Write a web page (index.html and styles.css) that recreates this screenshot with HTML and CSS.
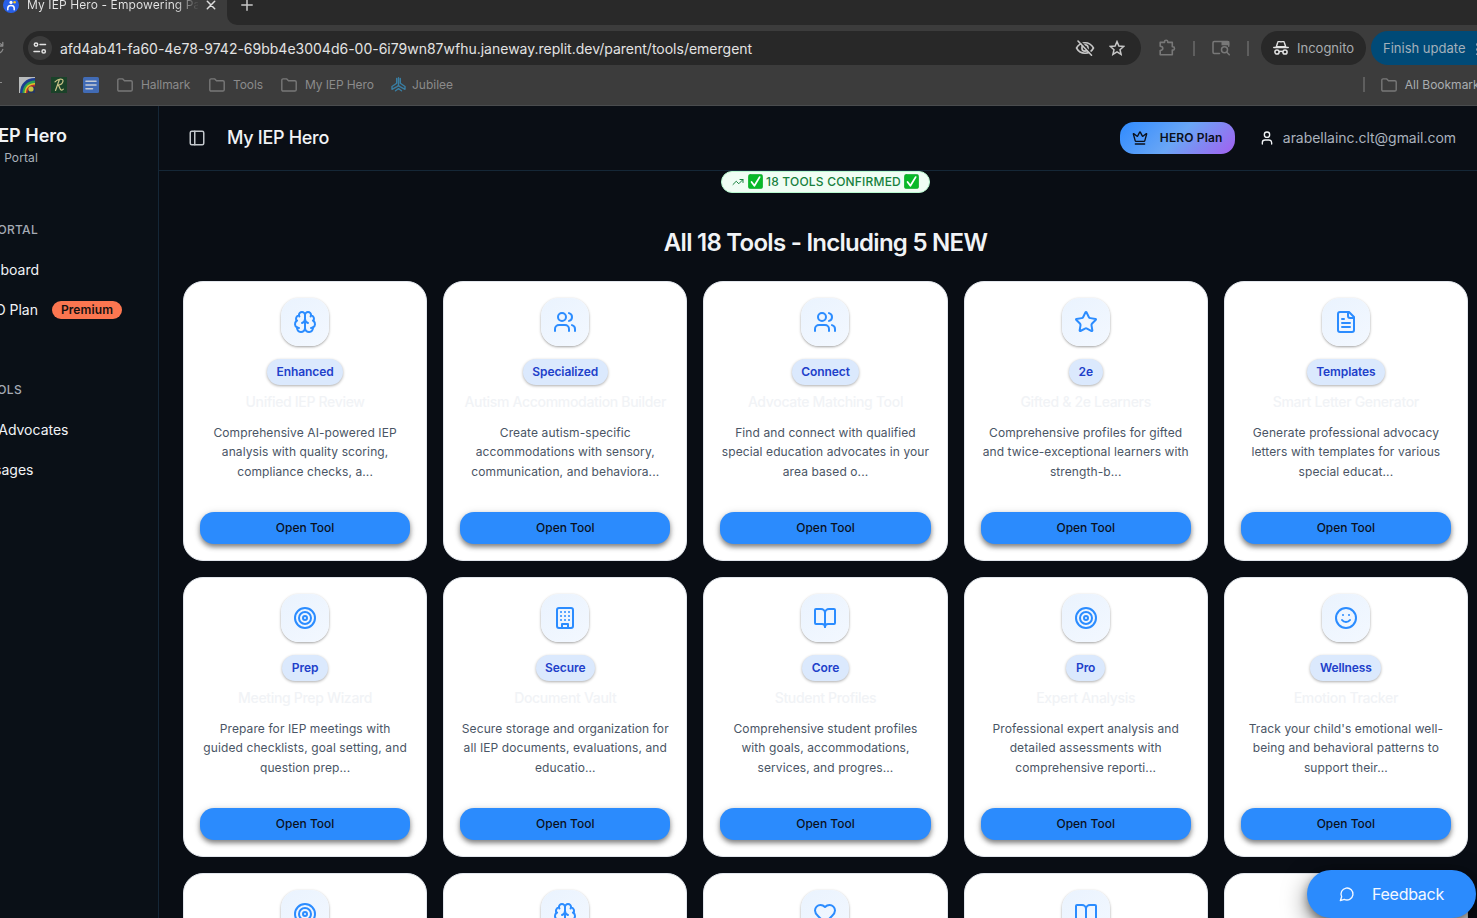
FILE: index.html
```html
<!DOCTYPE html>
<html lang="en">
<head>
<meta charset="utf-8">
<title>My IEP Hero - Empowering Parents</title>
<link rel="stylesheet" href="styles.css">
</head>
<body>
<svg class="sprite" aria-hidden="true">
  <symbol id="brain" viewBox="0 0 24 24"><path d="M12 5a3 3 0 1 0-5.997.125 4 4 0 0 0-2.526 5.77 4 4 0 0 0 .556 6.588A4 4 0 1 0 12 18Z"/><path d="M12 5a3 3 0 1 1 5.997.125 4 4 0 0 1 2.526 5.77 4 4 0 0 1-.556 6.588A4 4 0 1 1 12 18Z"/><path d="M15 13a4.5 4.5 0 0 1-3-4 4.5 4.5 0 0 1-3 4"/><path d="M17.599 6.5a3 3 0 0 0 .399-1.375M6.003 5.125A3 3 0 0 0 6.401 6.5M3.477 10.896a4 4 0 0 1 .585-.396M19.938 10.5a4 4 0 0 1 .585.396M6 18a4 4 0 0 1-1.967-.516M19.967 17.484A4 4 0 0 1 18 18"/></symbol>
  <symbol id="users" viewBox="0 0 24 24"><path d="M16 21v-2a4 4 0 0 0-4-4H6a4 4 0 0 0-4 4v2"/><circle cx="9" cy="7" r="4"/><path d="M22 21v-2a4 4 0 0 0-3-3.87M16 3.13a4 4 0 0 1 0 7.75"/></symbol>
  <symbol id="star" viewBox="0 0 24 24"><path d="M11.525 2.295a.53.53 0 0 1 .95 0l2.31 4.679a2.123 2.123 0 0 0 1.595 1.16l5.166.756a.53.53 0 0 1 .294.904l-3.736 3.638a2.123 2.123 0 0 0-.611 1.878l.882 5.14a.53.53 0 0 1-.771.56l-4.618-2.428a2.122 2.122 0 0 0-1.973 0L6.396 21.01a.53.53 0 0 1-.77-.56l.881-5.139a2.122 2.122 0 0 0-.611-1.879L2.16 9.795a.53.53 0 0 1 .294-.906l5.165-.755a2.122 2.122 0 0 0 1.597-1.16z"/></symbol>
  <symbol id="file" viewBox="0 0 24 24"><path d="M15 2H6a2 2 0 0 0-2 2v16a2 2 0 0 0 2 2h12a2 2 0 0 0 2-2V7Z"/><path d="M14 2v4a2 2 0 0 0 2 2h4M10 9H8M16 13H8M16 17H8"/></symbol>
  <symbol id="target" viewBox="0 0 24 24"><circle cx="12" cy="12" r="10"/><circle cx="12" cy="12" r="6"/><circle cx="12" cy="12" r="2"/></symbol>
  <symbol id="building" viewBox="0 0 24 24"><rect x="4" y="2" width="16" height="20" rx="2"/><path d="M9 22v-4h6v4M8 6h.01M16 6h.01M12 6h.01M12 10h.01M12 14h.01M16 10h.01M16 14h.01M8 10h.01M8 14h.01"/></symbol>
  <symbol id="book" viewBox="0 0 24 24"><path d="M12 7v14"/><path d="M3 18a1 1 0 0 1-1-1V4a1 1 0 0 1 1-1h5a4 4 0 0 1 4 4 4 4 0 0 1 4-4h5a1 1 0 0 1 1 1v13a1 1 0 0 1-1 1h-6a3 3 0 0 0-3 3 3 3 0 0 0-3-3z"/></symbol>
  <symbol id="smile" viewBox="0 0 24 24"><circle cx="12" cy="12" r="10"/><path d="M8 14s1.5 2 4 2 4-2 4-2M9 9h.01M15 9h.01"/></symbol>
  <symbol id="heart" viewBox="0 0 24 24"><path d="M19 14c1.49-1.46 3-3.21 3-5.5A5.5 5.5 0 0 0 16.5 3c-1.76 0-3 .5-4.5 2-1.5-1.5-2.74-2-4.5-2A5.5 5.5 0 0 0 2 8.500c0 2.300 1.500 4.050 3 5.500l7 7Z"/></symbol>
  <symbol id="folder" viewBox="0 0 16 14"><path d="M.8 11.7V2.2c0-.8.5-1.3 1.300-1.300h3.700l1.700 1.800h6.400c.8 0 1.300.5 1.300 1.300v7.700c0 .8-.5 1.300-1.300 1.300H2.100c-.8 0-1.300-.5-1.300-1.300z"/></symbol>
  <symbol id="check" viewBox="0 0 16 16"><rect x=".2" y=".2" width="15.6" height="15.6" rx="2.6" fill="#08b928" stroke="#08951f" stroke-width=".4"/><path d="M3.800 8.600l3 4 5.600-9.300" fill="none" stroke="#fff" stroke-width="1.9"/></symbol>
</svg>

<div class="browser">
  <div class="tabs">
    <div class="tab">
      <svg class="favicon" viewBox="0 0 16 16"><circle cx="8" cy="8" r="8" fill="#2860e8"/><circle cx="8" cy="5.4" r="1.6" fill="#fff"/><path d="M4.800 12.700V11q0-2.600 3.200-2.600t3.200 2.600v1.700" stroke="#fff" stroke-width="1.500" fill="none"/><circle cx="11.600" cy="5.300" r="1.300" fill="#f5c62c"/></svg>
      <span class="tab-title">My IEP Hero - Empowering Pa</span>
      <svg class="tab-close" viewBox="0 0 10 10"><path d="M1.3 1.3l7.400 7.400M8.700 1.300L1.300 8.700"/></svg>
    </div>
    <div class="strip"><svg class="plus" viewBox="0 0 12 12"><path d="M6 .8v10.400M.8 6h10.400"/></svg></div>
  </div>
  <div class="toolbar">
    <svg class="reload" viewBox="0 0 5 14"><path d="M-1 5h3.800V1.500M2.800 5Q1.500 2.800-1 2.300M-1 12q3-.7 3.800-3.600"/></svg>
    <div class="address">
      <span class="site"><svg viewBox="0 0 14 12"><circle cx="3" cy="2.600" r="1.700"/><path d="M7 2.600h5.500M1 9.400h5.500"/><circle cx="10.700" cy="9.400" r="1.700"/></svg></span>
      <span class="url">afd4ab41-fa60-4e78-9742-69bb4e3004d6-00-6i79wn87wfhu.janeway.replit.dev/parent/tools/emergent</span>
      <svg class="eye" viewBox="0 0 20 16"><path d="M1.500 8Q4.400 2.700 10 2.700T18.500 8Q15.600 13.300 10 13.300T1.500 8z"/><circle cx="10" cy="8" r="3.100"/><path class="cut" d="M4.200 0l13 14.500"/><path d="M3 1l13.500 14.200"/></svg>
      <svg class="fav" viewBox="0 0 16 16"><path d="M8 1.600l1.900 4.500 4.800.4-3.700 3.200 1.100 4.700L8 11.900l-4.100 2.500L5 9.700 1.300 6.500l4.800-.4z"/></svg>
    </div>
    <svg class="puzzle" viewBox="0 0 17 17"><path d="M1.200 3.400h4.300V2.700c0-2 3.300-2 3.300 0v.7h4.500v4.400h.6c2.100 0 2.100 3.300 0 3.300h-.6v4.700H1.200v-4.300c3.500-.4 3.500-4 0-4.300z"/></svg>
    <i class="rule"></i>
    <svg class="side-search" viewBox="0 0 18 16"><path d="M7.500 13.400H2.200c-.8 0-1.200-.5-1.200-1.200V2.800c0-.8.5-1.200 1.200-1.200h13.500c.7 0 1 .5 1 1.200v3.500"/><path class="solid" d="M9.500 1h7.700v4.300H9.500z"/><circle cx="12.500" cy="9.800" r="3"/><path d="M14.600 12l2.700 2.800"/></svg>
    <i class="rule"></i>
    <div class="incognito"><svg viewBox="0 0 16 14"><path class="hat" d="M3.300 5.800L4.800 1.200C5 .5 5.600.3 6.300.5L8 .9l1.700-.4c.7-.2 1.300 0 1.500.7l1.500 4.600z"/><path d="M.8 6.500h14.400M6.400 10.700q1.600-.9 3.200 0"/><circle cx="4" cy="11" r="2.100"/><circle cx="12" cy="11" r="2.100"/></svg><span>Incognito</span></div>
    <div class="update"><span>Finish update</span><i></i></div>
  </div>
  <div class="bookmarks">
    <i class="nub"></i>
    <svg class="bm-icon" viewBox="0 0 16 16"><path d="M0 0h16v16H0z" fill="#b9bcbc"/><path d="M1 16C1 7 7 1 16 1v15z" fill="#1d3c91"/><path d="M3.500 16C3.500 8.500 9 3.500 16 3.500V16z" fill="#2ba052"/><path d="M5.500 16C5.500 9.500 10 6 16 6v10z" fill="#e0c32c"/><path d="M7 16c0-5.500 4-8.500 9-8.500V16z" fill="#b62e2c"/><path d="M8.500 16c0-4 3-6.500 7.500-6.500V16z" fill="#26345f"/><circle cx="12" cy="12" r="2.600" fill="#c7c445"/></svg>
    <svg class="bm-icon" viewBox="0 0 16 16"><path d="M0 0h16v16H0z" fill="#1a4229"/><path d="M4 4.800C7 1.600 12.500 1 12 4.100 11.600 6.800 8.600 8 6.800 8.100c2 .2 1.500 4.700 3.600 5 .8.100 1.400-.5 1.900-1M8.200 3.300C6.800 6.500 6 10 4.500 13.500" fill="none" stroke="#c9c388" stroke-width="1.200"/></svg>
    <svg class="bm-icon" viewBox="0 0 16 16"><rect width="16" height="16" rx="1.500" fill="#416bb5"/><path d="M3 4.200h10M3 8h10M3 11.800h6.500" stroke="#c5cbd5" stroke-width="1.600"/></svg>
    <span class="bm w-hall"><svg class="folder"><use href="#folder"/></svg><span>Hallmark</span></span>
    <span class="bm w-tools"><svg class="folder"><use href="#folder"/></svg><span>Tools</span></span>
    <span class="bm w-hero"><svg class="folder"><use href="#folder"/></svg><span>My IEP Hero</span></span>
    <span class="bm"><svg class="jubilee" viewBox="0 0 15 15"><path d="M5.700 1.500v4.700L1 9.500v2.800l5-2.700 1.500-1M9.300 1.500v4.700L14 9.500v2.800L9 9.600l-1.500-1M7.500.700v7.900M4.500 13.800l3-2.200 3 2.200"/></svg><span>Jubilee</span></span>
    <span class="all"><i class="rule"></i><svg class="folder"><use href="#folder"/></svg><span>All Bookmarks</span></span>
  </div>
</div>

<div class="app">
  <aside class="sidebar">
    <div class="brand">EP Hero</div>
    <div class="sub">Portal</div>
    <div class="group g1">ORTAL</div>
    <div class="nav n1">board</div>
    <div class="nav plan"><span class="n2">O Plan</span><b class="premium">Premium</b></div>
    <div class="group g2">OLS</div>
    <div class="nav n3">Advocates</div>
    <div class="nav n4">sages</div>
  </aside>
  <main class="main">
    <header class="header">
      <svg class="panel" viewBox="0 0 24 24"><rect x="3" y="3" width="18" height="18" rx="2"/><path d="M9 3v18"/></svg>
      <span class="title">My IEP Hero</span>
      <div class="hero-plan"><svg viewBox="0 0 24 24"><path d="M11.562 3.266a.5.5 0 0 1 .876 0L15.390 8.870a1 1 0 0 0 1.516.294L21.183 5.500a.5.5 0 0 1 .798.519l-2.834 10.246a1 1 0 0 1-.956.734H5.810a1 1 0 0 1-.957-.734L2.020 6.020a.5.5 0 0 1 .798-.519l4.276 3.664a1 1 0 0 0 1.516-.294zM5 21h14"/></svg><span>HERO Plan</span></div>
      <div class="account"><svg viewBox="0 0 24 24"><path d="M19 21v-2a4 4 0 0 0-4-4H9a4 4 0 0 0-4 4v2"/><circle cx="12" cy="7" r="4"/></svg><span>arabellainc.clt@gmail.com</span></div>
    </header>
    <section class="content">
      <div class="confirmed"><svg class="trend" viewBox="0 0 24 24"><path d="M22 7l-8.500 8.500-5-5L2 17M16 7h6v6"/></svg><svg class="check"><use href="#check"/></svg><span>18 TOOLS CONFIRMED</span><svg class="check"><use href="#check"/></svg></div>
      <h1>All 18 Tools - Including 5 NEW</h1>
      <div class="grid">
        <article class="card"><div class="tile"><svg><use href="#brain"/></svg></div><div class="badge">Enhanced</div><h2>Unified IEP Review</h2><p>Comprehensive AI-powered IEP<br>analysis with quality scoring,<br>compliance checks, a...</p><button>Open Tool</button></article>
        <article class="card"><div class="tile"><svg><use href="#users"/></svg></div><div class="badge">Specialized</div><h2>Autism Accommodation Builder</h2><p>Create autism-specific<br>accommodations with sensory,<br>communication, and behaviora...</p><button>Open Tool</button></article>
        <article class="card"><div class="tile"><svg><use href="#users"/></svg></div><div class="badge">Connect</div><h2>Advocate Matching Tool</h2><p>Find and connect with qualified<br>special education advocates in your<br>area based o...</p><button>Open Tool</button></article>
        <article class="card"><div class="tile"><svg><use href="#star"/></svg></div><div class="badge">2e</div><h2>Gifted &amp; 2e Learners</h2><p>Comprehensive profiles for gifted<br>and twice-exceptional learners with<br>strength-b...</p><button>Open Tool</button></article>
        <article class="card"><div class="tile"><svg><use href="#file"/></svg></div><div class="badge">Templates</div><h2>Smart Letter Generator</h2><p>Generate professional advocacy<br>letters with templates for various<br>special educat...</p><button>Open Tool</button></article>
        <article class="card"><div class="tile"><svg><use href="#target"/></svg></div><div class="badge">Prep</div><h2>Meeting Prep Wizard</h2><p>Prepare for IEP meetings with<br>guided checklists, goal setting, and<br>question prep...</p><button>Open Tool</button></article>
        <article class="card"><div class="tile"><svg><use href="#building"/></svg></div><div class="badge">Secure</div><h2>Document Vault</h2><p>Secure storage and organization for<br>all IEP documents, evaluations, and<br>educatio...</p><button>Open Tool</button></article>
        <article class="card"><div class="tile"><svg><use href="#book"/></svg></div><div class="badge">Core</div><h2>Student Profiles</h2><p>Comprehensive student profiles<br>with goals, accommodations,<br>services, and progres...</p><button>Open Tool</button></article>
        <article class="card"><div class="tile"><svg><use href="#target"/></svg></div><div class="badge">Pro</div><h2>Expert Analysis</h2><p>Professional expert analysis and<br>detailed assessments with<br>comprehensive reporti...</p><button>Open Tool</button></article>
        <article class="card"><div class="tile"><svg><use href="#smile"/></svg></div><div class="badge">Wellness</div><h2>Emotion Tracker</h2><p>Track your child's emotional well-<br>being and behavioral patterns to<br>support their...</p><button>Open Tool</button></article>
        <article class="card"><div class="tile"><svg><use href="#target"/></svg></div></article>
        <article class="card"><div class="tile"><svg><use href="#brain"/></svg></div></article>
        <article class="card"><div class="tile"><svg><use href="#heart"/></svg></div></article>
        <article class="card"><div class="tile"><svg><use href="#book"/></svg></div></article>
        <article class="card"></article>
      </div>
    </section>
  </main>
</div>
<div class="feedback"><svg viewBox="0 0 24 24"><path d="M7.900 20A9 9 0 1 0 4 16.100L2 22Z"/></svg><span>Feedback</span></div>
</body>
</html>
```
FILE: styles.css
```css
* { box-sizing: border-box; }
body {
  margin: 0; width: 1477px; height: 918px; overflow: hidden; position: relative;
  display: flex; flex-direction: column;
  background: #090d14; color: #f1f3f6;
  font-family: Inter, "Liberation Sans", sans-serif;
}
svg { flex: none; fill: none; stroke: currentColor; stroke-width: 2; stroke-linecap: round; stroke-linejoin: round; }
span { white-space: nowrap; }
.sprite { position: absolute; width: 0; height: 0; }

/* Browser chrome */
.browser { flex: none; height: 106px; background: #3c3c3c; border-bottom: 1px solid #4a4c4e; overflow: hidden; }
.tabs { display: flex; height: 25px; background: #3c3c3c; }
.tab { width: 227px; height: 25px; display: flex; align-items: flex-start; padding-left: 3px; }
.favicon { width: 16px; height: 16px; margin-top: -3px; stroke: none; }
.tab-title { font-size: 12px; line-height: 16px; margin: -3px 0 0 8px; width: 171px; letter-spacing: .1px; color: #e6e6e6;
  background: linear-gradient(90deg, #e6e6e6 148px, #4a4a4a 170px); -webkit-background-clip: text; background-clip: text; -webkit-text-fill-color: transparent; }
.tab-close { width: 10px; height: 10px; margin: 0 0 0 8px; color: #dedede; stroke-width: 1.5; }
.strip { flex: 1; background: #292929; border-bottom-left-radius: 10px; }
.plus { display: block; width: 12px; height: 12px; margin: -1px 0 0 14px; color: #c7c7c7; stroke-width: 1.5; }
.toolbar { height: 46px; display: flex; align-items: center; }
.reload { width: 5px; height: 14px; color: #8b8b8b; stroke-width: 1.3; }
.address { flex: none; width: 1118px; height: 34px; margin-left: 18px; border-radius: 17px; background: #282828; display: flex; align-items: center; padding-left: 5px; color: #e3e3e3; }
.site { width: 24px; height: 24px; border-radius: 50%; background: #3c3c3c; display: flex; align-items: center; justify-content: center; }
.site svg { width: 14px; height: 12px; stroke-width: 1.5; }
.url { width: 1015px; margin: 0 0 0 8px; font-size: 14px; letter-spacing: -.003px; }
.eye { width: 20px; height: 16px; stroke-width: 1.6; color: #c7c7c7; }
.eye .cut { stroke: #282828; }
.fav { width: 16px; height: 16px; margin-left: 14px; stroke-width: 1.5; color: #c7c7c7; stroke-linejoin: miter; }
.puzzle { width: 17px; height: 17px; margin: -2px 0 0 18px; color: #787878; stroke-width: 1.6; }
.rule { flex: none; width: 2px; height: 15px; background: #5e5e5e; margin-left: 17px; }
.side-search { width: 18px; height: 16px; margin-left: 17px; color: #787878; stroke-width: 1.5; }
.side-search + .rule { margin-left: 17px; }
.side-search .solid { fill: currentColor; stroke: none; }
.incognito { width: 105px; height: 34px; flex: none; margin-left: 12px; border-radius: 17px; background: #282828; display: flex; align-items: center; padding-left: 12px; font-size: 13px; color: #a9adb0; }
.incognito svg { width: 16px; height: 14px; margin-right: 8px; color: #e3e3e3; stroke-width: 1.5; }
.incognito .hat { stroke-width: 1.4; }
.update { flex: none; width: 130px; height: 34px; margin-left: 5px; border-radius: 17px; background: #004a77; color: #a4b1bb; font-size: 13px; padding-left: 12px; display: flex; align-items: center; }
.update i { width: 3px; height: 13px; margin-left: 11px; background: radial-gradient(circle, #7c9db5 1.3px, transparent 1.6px) 0 0 / 3px 5px; }
.bookmarks { height: 27px; display: flex; align-items: center; font-size: 12px; color: #8b8b8b; }
.nub { width: 2px; height: 1px; background: #8b8b8b; margin: -5px 17px 0 0; }
.bm-icon { width: 16px; height: 16px; margin-right: 16px; stroke: none; }
.bm { display: flex; align-items: center; }
.w-hall { width: 92px; margin-left: 2px; letter-spacing: -.08px; }
.w-tools { width: 72px; letter-spacing: -.1px; }
.w-hero { width: 110px; letter-spacing: -.1px; }
.folder { width: 16px; height: 14px; margin-right: 8px; stroke-width: 1.4; color: #787878; }
.jubilee { width: 15px; height: 15px; margin-right: 6px; color: #397ea3; stroke-width: 1.4; }
.all { margin-left: auto; margin-right: -9px; display: flex; align-items: center; color: #a9adb0; }
.all .folder { margin-left: 16px; }

/* Application */
.app { flex: 1; min-height: 0; display: flex; }
.sidebar { flex: none; width: 159px; border-right: 1px solid #152737; background: #0a1017; overflow: hidden; display: flex; flex-direction: column; align-items: flex-start; }
.sidebar > div { white-space: nowrap; display: flex; justify-content: flex-end; }
.brand { width: 67px; margin-top: 16px; font-size: 18px; line-height: 28px; font-weight: 600; }
.sub { width: 38px; font-size: 12px; line-height: 16px; color: #a9b0b9; letter-spacing: .12px; }
.group { font-size: 12px; line-height: 16px; font-weight: 500; letter-spacing: .3px; color: #a5abb4; }
.g1 { width: 38px; margin-top: 56px; }
.g2 { width: 22px; margin-top: 62px; }
.nav { font-size: 14px; line-height: 20px; margin-top: 20px; }
.sidebar .n1 { width: 39px; margin-top: 22px; }
.sidebar .plan { width: 122px; align-items: center; }
.plan .n2 { margin-right: 14px; }
.premium { flex: none; width: 70px; height: 18px; border-radius: 9px; background: #fb7650; color: #151111; font-size: 12px; line-height: 18px; font-weight: 600; letter-spacing: .1px; text-align: center; }
.sidebar .n3 { width: 68.5px; margin-top: 22px; }
.sidebar .n4 { width: 33.5px; }
.main { flex: 1; min-width: 0; display: flex; flex-direction: column; }
.header { flex: none; height: 65px; border-bottom: 1px solid #152737; background: #0a0e15; display: flex; align-items: center; padding: 0 21px 0 29px; }
.panel { width: 18px; height: 18px; color: #c3c7cc; }
.title { margin: -1px 0 0 21px; font-size: 18px; font-weight: 500; letter-spacing: -.3px; }
.hero-plan { margin-left: auto; width: 115px; height: 32px; border-radius: 14px; background: linear-gradient(135deg, #2f8bff 0%, #6aa6f5 50%, #a35ff0 100%); color: #0a101b; display: flex; align-items: center; padding: 0 0 1px 12px; font-size: 12px; font-weight: 600; letter-spacing: .15px; }
.hero-plan svg { width: 16px; height: 16px; margin-right: 12px; }
.account { display: flex; align-items: center; margin: -1px 0 0 24px; font-size: 14px; color: #aab2bd; letter-spacing: -.03px; }
.account svg { width: 16px; height: 16px; margin-right: 8px; color: #f1f3f6; }
.content { flex: 1; min-height: 0; overflow: hidden; padding: 0 9px 0 24px; display: flex; flex-direction: column; }
.confirmed { flex: none; align-self: center; width: 209px; height: 22px; border: 1px solid #b9f8cf; border-radius: 11px; background: #f0fdf4; color: #16803d; display: flex; align-items: center; justify-content: center; gap: 3px; font-size: 12px; font-weight: 500; letter-spacing: .2px; padding-bottom: 1px; }
.trend { width: 12px; height: 12px; margin-right: 1px; }
.check { width: 15px; height: 15px; stroke: none; }
h1 { margin: 32px 0 22px; padding-top: 1px; text-align: center; font-size: 24px; line-height: 33px; font-weight: 600; letter-spacing: -.73px; white-space: nowrap; }
.grid { display: grid; grid-template-columns: repeat(5, minmax(0, 1fr)); grid-auto-rows: 280px; gap: 16px; }
.card { border: 1px solid #e2e6ec; border-radius: 20px; background: #fff; padding: 16px; display: flex; flex-direction: column; align-items: center; text-align: center; }
.tile { flex: none; width: 48px; height: 48px; border-radius: 18px; background: linear-gradient(145deg, #eaf3fe, #f3f8ff); box-shadow: 0 1px 3px rgba(0,0,0,.28), 0 1px 2px rgba(0,0,0,.12); display: flex; align-items: center; justify-content: center; color: #2b8cff; }
.tile svg { width: 24px; height: 24px; }
.badge { flex: none; height: 26px; margin-top: 13px; padding: 0 9.6px; border-radius: 13px; background: #dbe9fd; box-shadow: 0 1px 3px rgba(0,0,0,.32); color: #2140ca; font-size: 12px; line-height: 25px; font-weight: 600; letter-spacing: -.08px; }
h2 { margin: 8px 0 0; font-size: 14px; line-height: 18px; font-weight: 500; letter-spacing: -.32px; color: #f1f3f6; white-space: nowrap; }
p { margin: 11.75px 0 0; font-size: 12px; line-height: 19.5px; color: #4a5565; white-space: nowrap; letter-spacing: .1px; }
button { width: 100%; height: 32px; margin: auto 0 0; padding: 0 0 2px; border: 0; border-radius: 14px; background: #2b8bfd; box-shadow: 0 3px 5px rgba(0,0,0,.45), 0 1px 8px rgba(0,0,0,.12); color: #0a101b; font: 500 12px Inter, "Liberation Sans", sans-serif; }
.feedback { position: absolute; left: 1307px; top: 870px; width: 169px; height: 48px; border-radius: 24px; background: #2b8bfd; box-shadow: 0 8px 24px rgba(0,0,0,.5), 0 4px 8px rgba(0,0,0,.35); display: flex; align-items: center; padding-left: 32px; font-size: 16px; letter-spacing: -.27px; color: #f4f8ff; }
.feedback svg { width: 16px; height: 16px; margin-right: 17px; }
```
